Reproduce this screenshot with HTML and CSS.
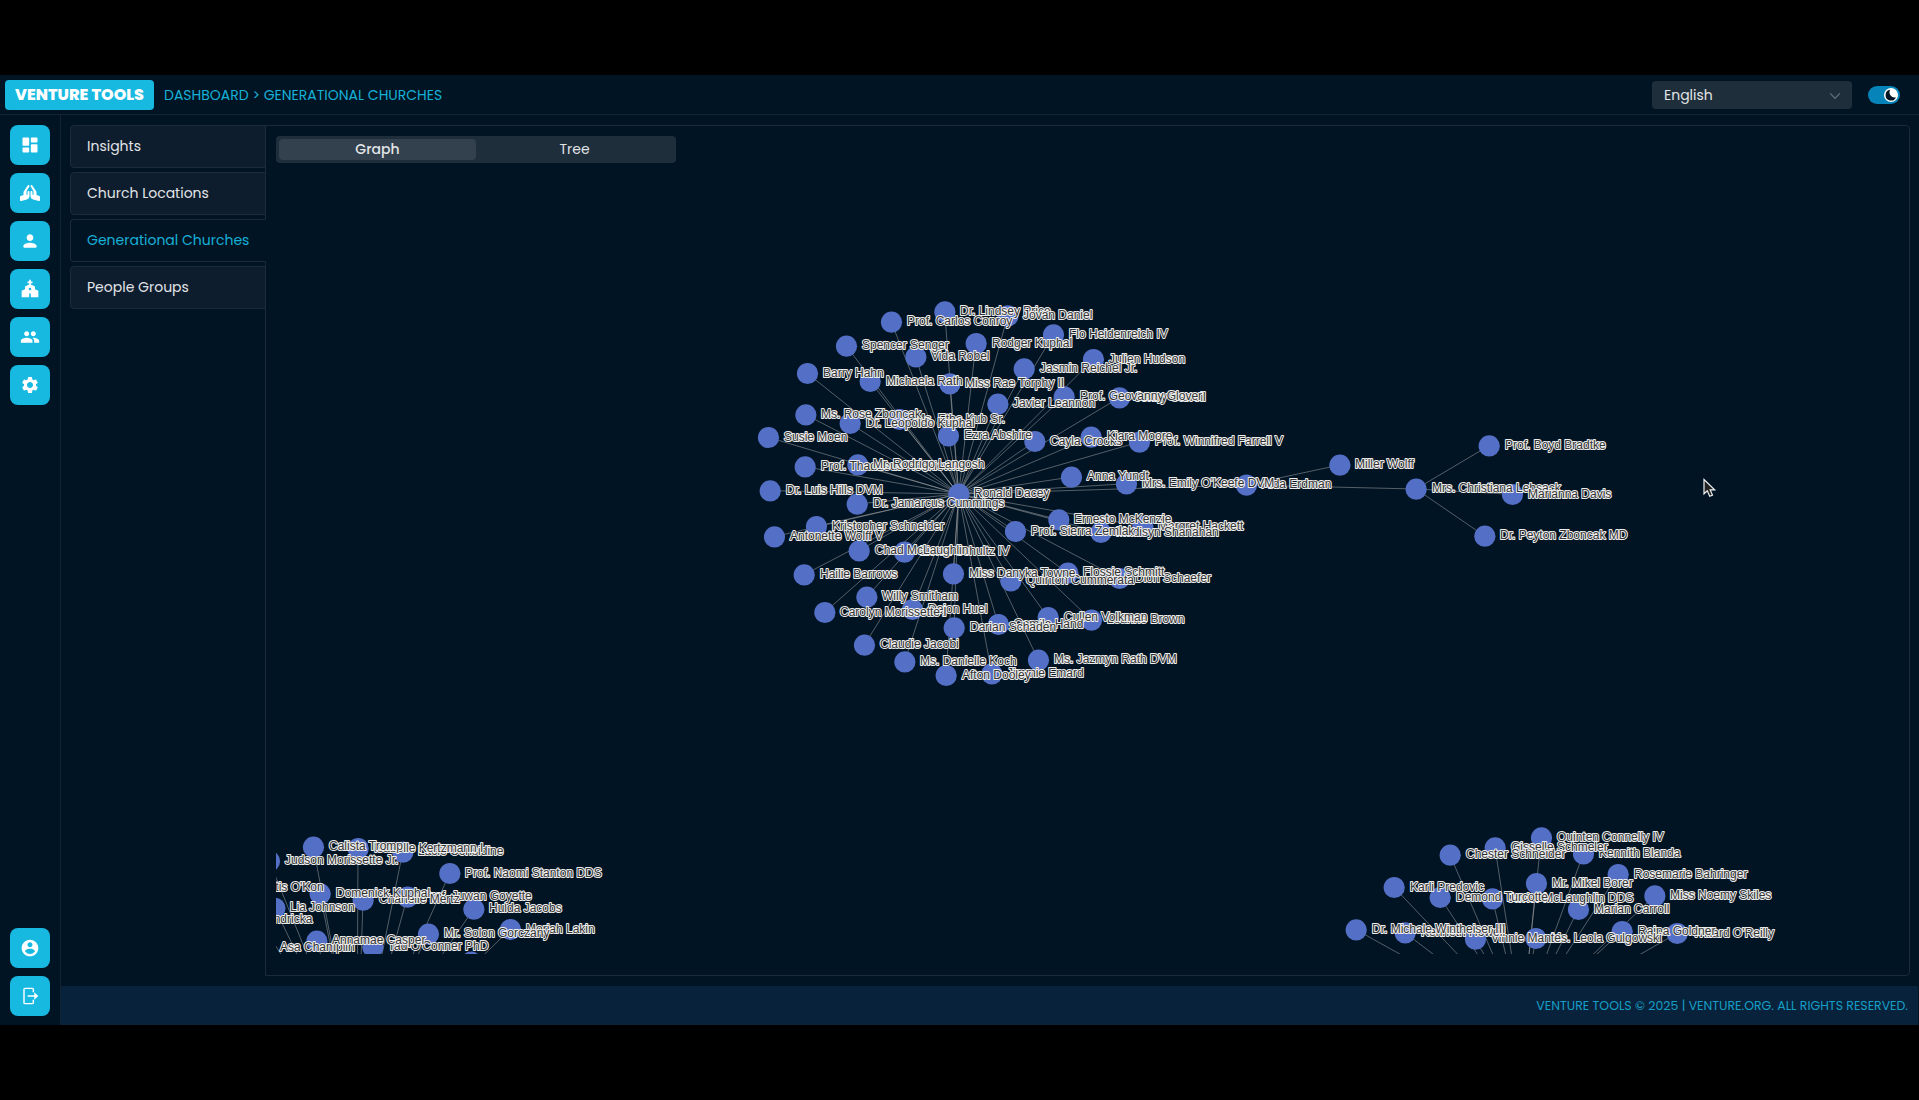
FILE: index.html
```html
<!DOCTYPE html>
<html lang="en">
<head>
<meta charset="utf-8">
<title>Venture Tools - Generational Churches</title>
<link rel="stylesheet" href="styles.css">
</head>
<body>
<div class="app">
  <header class="topbar">
    <div class="brand"><span>VENTURE TOOLS</span></div>
    <nav class="crumbs">DASHBOARD &gt; GENERATIONAL CHURCHES</nav>
    <div class="select">
      <span>English</span>
      <svg width="12" height="12" viewBox="0 0 12 12"><path d="M1.2 3.4 6 8.4l4.800-5" fill="none" stroke="#66727c" stroke-width="1.200"/></svg>
    </div>
    <div class="switch"><i><svg width="12" height="12" viewBox="0 0 12 12"><path d="M5.300.8A5.400 5.400 0 1 0 11 8.200 5 5 0 0 1 5.300.8z"/></svg></i></div>
  </header>
  <div class="body">
    <aside class="rail">
      <a class="btn"><svg viewBox="0 0 24 24"><path d="M4 13h6c.55 0 1-.45 1-1V4c0-.55-.45-1-1-1H4c-.55 0-1 .45-1 1v8c0 .55.45 1 1 1zm0 8h6c.55 0 1-.45 1-1v-4c0-.55-.45-1-1-1H4c-.55 0-1 .45-1 1v4c0 .55.45 1 1 1zm10 0h6c.55 0 1-.45 1-1v-8c0-.55-.45-1-1-1h-6c-.55 0-1 .45-1 1v8c0 .55.45 1 1 1zM13 4v4c0 .55.45 1 1 1h6c.55 0 1-.45 1-1V4c0-.55-.45-1-1-1h-6c-.55 0-1 .45-1 1z"/></svg></a>
      <a class="btn"><svg viewBox="0 0 640 512"><path d="M272 191.910c-17.600 0-32 14.400-32 32v80c0 8.840-7.160 16-16 16s-16-7.160-16-16v-76.550c0-17.390 4.720-34.470 13.690-49.390l77.750-129.590c9.090-15.160 4.190-34.810-10.970-43.910-14.450-8.670-32.720-4.300-42.300 9.210-.2.230-.62.210-.79.480l-117.260 175.900C117.560 205.900 112 224.310 112 243.290v80.230l-90.120 30.040A31.974 31.974 0 0 0 0 383.910v96c0 10.820 8.520 32 32 32 2.690 0 5.410-.34 8.060-1.030l179.190-46.620C269.160 449.990 304 403.800 304 351.910v-128c0-17.600-14.400-32-32-32zm346.120 161.730L528 323.600v-80.230c0-18.980-5.560-37.390-16.120-53.230L394.620 14.250c-.18-.27-.59-.24-.79-.48-9.580-13.510-27.850-17.880-42.300-9.210-15.160 9.090-20.060 28.750-10.970 43.910l77.750 129.590c8.970 14.920 13.690 32 13.690 49.390V304c0 8.840-7.160 16-16 16s-16-7.160-16-16v-80c0-17.600-14.400-32-32-32s-32 14.400-32 32v128c0 51.890 34.840 98.080 84.750 112.340l179.190 46.620c2.660.69 5.380 1.030 8.060 1.030 23.480 0 32-21.180 32-32v-96c0-13.770-8.810-25.990-21.880-30.350z"/></svg></a>
      <a class="btn"><svg viewBox="0 0 24 24"><path d="M12 12c2.210 0 4-1.790 4-4s-1.790-4-4-4-4 1.790-4 4 1.790 4 4 4zm0 2c-2.670 0-8 1.340-8 4v1c0 .55.45 1 1 1h14c.55 0 1-.45 1-1v-1c0-2.660-5.330-4-8-4z"/></svg></a>
      <a class="btn"><svg viewBox="0 0 24 24"><path d="M18 12.220V9l-5-2.500V5h2V3h-2V1h-2v2H9v2h2v1.500L6 9v3.220L2 14v8h9v-4c0-.55.45-1 1-1s1 .45 1 1v4h9v-8l-4-1.780zM12 13.500c-.83 0-1.500-.67-1.500-1.500s.67-1.500 1.500-1.500 1.500.67 1.500 1.500-.67 1.500-1.500 1.500z"/></svg></a>
      <a class="btn"><svg viewBox="0 0 24 24"><path d="M16 11c1.660 0 2.990-1.340 2.990-3S17.660 5 16 5c-1.660 0-3 1.340-3 3s1.340 3 3 3zm-8 0c1.660 0 2.990-1.340 2.990-3S9.660 5 8 5C6.340 5 5 6.340 5 8s1.340 3 3 3zm0 2c-2.330 0-7 1.170-7 3.500V19h14v-2.500c0-2.330-4.670-3.500-7-3.500zm8 0c-.29 0-.62.02-.97.05 1.160.84 1.970 1.970 1.970 3.450V19h6v-2.500c0-2.330-4.670-3.500-7-3.500z"/></svg></a>
      <a class="btn"><svg viewBox="0 0 24 24"><path d="M19.140 12.940c.04-.3.060-.61.060-.94 0-.32-.02-.64-.07-.94l2.030-1.580c.18-.14.23-.41.120-.61l-1.920-3.320c-.12-.22-.37-.29-.59-.22l-2.390.96c-.5-.38-1.030-.7-1.620-.94l-.36-2.540c-.04-.24-.24-.41-.48-.41h-3.840c-.24 0-.43.17-.47.410l-.36 2.540c-.59.24-1.130.57-1.620.94l-2.390-.96c-.22-.08-.47 0-.59.220L2.740 8.870c-.12.21-.08.470.120.610l2.030 1.580c-.05.3-.09.630-.09.940s.02.640.070.940l-2.030 1.580c-.18.14-.23.410-.12.610l1.920 3.320c.12.220.37.290.59.220l2.390-.96c.5.380 1.030.7 1.620.94l.36 2.540c.05.240.24.410.48.410h3.840c.24 0 .44-.17.470-.41l.36-2.540c.59-.24 1.130-.56 1.620-.94l2.390.96c.22.080.47 0 .59-.22l1.920-3.320c.12-.22.070-.47-.12-.61l-2.010-1.580zM12 15.600c-1.980 0-3.600-1.620-3.600-3.600s1.620-3.600 3.600-3.600 3.600 1.620 3.600 3.600-1.620 3.600-3.600 3.600z"/></svg></a>
      <a class="btn push"><svg viewBox="0 0 24 24"><path d="M12 2C6.480 2 2 6.480 2 12s4.480 10 10 10 10-4.480 10-10S17.520 2 12 2zm0 3c1.660 0 3 1.340 3 3s-1.340 3-3 3-3-1.340-3-3 1.340-3 3-3zm0 14.200c-2.500 0-4.710-1.280-6-3.220.03-1.990 4-3.080 6-3.080 1.990 0 5.970 1.090 6 3.080-1.290 1.940-3.500 3.220-6 3.220z"/></svg></a>
      <a class="btn"><svg viewBox="0 0 21 21"><path d="M14 6.500V3.500a1 1 0 0 0-1-1H5.200a1 1 0 0 0-1 1v14a1 1 0 0 0 1 1H13a1 1 0 0 0 1-1v-3" fill="none" stroke="#fff" stroke-width="1.500"/><path d="M8 9.700h7V6.600l4.200 3.900-4.200 3.900v-3.100H8z"/></svg></a>
    </aside>
    <div class="main">
      <div class="content">
        <nav class="tabs">
          <a class="tab">Insights</a>
          <a class="tab">Church Locations</a>
          <a class="tab active">Generational Churches</a>
          <a class="tab">People Groups</a>
        </nav>
        <section class="panel">
          <div class="segmented"><span class="seg on">Graph</span><span class="seg">Tree</span></div>
          <svg class="graph" id="graph" viewBox="276 163 1617 791"></svg>
        </section>
      </div>
      <footer class="footer"><span>VENTURE TOOLS © 2025 | VENTURE.ORG. ALL RIGHTS RESERVED.</span></footer>
    </div>
  </div>
</div>
<svg class="cursor" width="14" height="21" viewBox="0 0 14 21"><path d="M1 1.500v14.300l3.300-3 2.400 5.500 2.800-1.200-2.400-5.300h4.600z" fill="#222" stroke="#eee" stroke-width="1.200"/></svg>
<script src="graph.js"></script>
</body>
</html>
```
FILE: styles.css
```css
* { box-sizing: border-box; }
body {
  margin: 0;
  padding: 75px 0;
  height: 1100px;
  overflow: hidden;
  background: #000;
  color: #e1e4e7;
  font-family: Poppins, Inter, sans-serif;
}
.app { height: 950px; display: flex; flex-direction: column; background: #001424; }
.topbar {
  flex: 0 0 40px;
  display: flex;
  align-items: center;
  padding: 0 19px 0 5px;
  border-bottom: 1px solid #132532;
}
.brand {
  width: 149px;
  height: 30px;
  display: flex;
  align-items: center;
  justify-content: center;
  border-radius: 4px;
  background: #17b9e1;
  color: #fff;
  font-size: 16px;
  font-weight: 800;
  white-space: nowrap;
}
.crumbs { margin-left: 10px; padding-top: 1px; color: #17b0d6; font-size: 14px; white-space: nowrap; }
.select {
  margin-left: auto;
  width: 200px;
  height: 28px;
  display: flex;
  align-items: center;
  justify-content: space-between;
  padding: 1px 11px 0 12px;
  border-radius: 4px;
  background: #1f2e3b;
  font-size: 14px;
}
.switch {
  width: 32px;
  height: 18px;
  margin-left: 16px;
  display: flex;
  align-items: center;
  justify-content: flex-end;
  padding-right: 2px;
  border-radius: 9px;
  background: #0683b8;
}
.select, .switch { margin-top: 1px; }
.switch i { width: 14px; height: 14px; display: grid; place-items: center; border-radius: 50%; background: #fff; }
.switch svg { fill: #001424; }
.body { flex: 1; display: flex; min-height: 0; }
.rail {
  flex: 0 0 61px;
  display: flex;
  flex-direction: column;
  gap: 8px;
  padding: 10px 0 9px 10px;
  border-right: 1px solid #132532;
}
.btn {
  width: 40px;
  height: 40px;
  display: grid;
  place-items: center;
  border-radius: 8px;
  background: #17b9e1;
}
.btn svg { width: 20px; height: 20px; overflow: visible; fill: #fff; }
.push { margin-top: auto; }
.main { flex: 1; display: flex; flex-direction: column; min-width: 0; }
.content { flex: 1; display: flex; padding: 10px 9px 10px 9px; }
.tabs { width: 196px; display: flex; flex-direction: column; gap: 4px; z-index: 1; margin-right: -1px; }
.tab {
  height: 43px;
  display: flex;
  align-items: center;
  padding-left: 16px;
  border: 1px solid #1b2b38;
  border-radius: 4px 0 0 4px;
  background: #0e1d2e;
  font-size: 14px;
  white-space: nowrap;
}
.tab.active { background: #001424; border-right-color: #001424; color: #17b0d6; }
.panel {
  flex: 1;
  display: flex;
  flex-direction: column;
  padding: 10px 15px 21px 10px;
  border: 1px solid #1b2b38;
  border-radius: 0 4px 4px 0;
}
.segmented { width: 400px; height: 27px; display: flex; padding: 3px; border-radius: 4px; background: #1f2e3b; }
.seg { flex: 1; display: grid; place-items: center; border-radius: 4px; font-size: 14px; }
.seg.on { background: #33414e; font-weight: 500; }
.graph { flex: 1; min-height: 0; width: 1617px; overflow: hidden; }
.edge { stroke: #aaa; stroke-opacity: .5; stroke-width: 1; }
.node { fill: #5470c6; }
.label {
  font: 12px "Liberation Sans", Arial, sans-serif;
  fill: #333;
  stroke: #eee;
  stroke-width: 2px;
  stroke-linejoin: round;
  paint-order: stroke;
}
.footer {
  flex: 0 0 39px;
  margin-right: 1px;
  display: flex;
  align-items: center;
  justify-content: flex-end;
  padding-right: 10px;
  background: #09223c;
  color: #169fc6;
  font-size: 12.5px;
  white-space: nowrap;
}
.cursor { position: absolute; left: 1703px; top: 478px; }
```
FILE: graph.js
```js
// Each cluster: hub [x, y, name] and its children [x, y, name, layer].
const clusters = [
  { hub: [958.7, 494, "Ronald Dacey"], children: [
    [944.7, 311.7, "Dr. Lindsey Price"], [891.3, 322, "Prof. Carlos Conroy"], [846.3, 346, "Spencer Senger"],
    [915.7, 356.7, "Vida Robel"], [976, 343.3, "Rodger Kuphal"], [807.3, 373.3, "Barry Hahn"],
    [870, 381.3, "Michaela Rath"], [949.7, 383.7, "Miss Rae Torphy II"], [805.7, 414.7, "Ms. Rose Zboncak"],
    [850, 423.3, "Dr. Leopoldo Kuphal"], [899.3, 419.3, "Ms. Etha Kub Sr."], [948.3, 435.7, "Ezra Abshire"],
    [997.7, 404, "Javier Leannon"], [768.3, 437.3, "Susie Moen"], [805, 466.7, "Prof. Thaddeus Hodkiewicz"],
    [857.7, 464.7, "Mr. Rodrigo Langosh", 1], [770, 490.7, "Dr. Luis Hills DVM"], [1007.7, 315.7, "Jovan Daniel", 1],
    [1053.3, 334.7, "Flo Heidenreich IV"], [1093.3, 359.3, "Julien Hudson"], [1024, 368.7, "Jasmin Reichel Jr."],
    [1064, 396.7, "Prof. Geovanny Glover"], [1119.3, 397.7, "Jenny Carroll"], [1034.7, 441.3, "Cayla Crooks"],
    [1091, 437, "Kiara Moore", 1], [1139.3, 442, "Prof. Winnifred Farrell V"], [1071.3, 477, "Anna Yundt"],
    [1126.3, 483.7, "Mrs. Emily O'Keefe DVM"], [1246.3, 485, "Alda Erdman"], [857, 504, "Dr. Jamarcus Cummings"],
    [816.3, 526.3, "Kristopher Schneider"], [774.3, 536.7, "Antonette Wolff V"], [859, 550.7, "Chad McLaughlin"],
    [904.3, 552, "Lionel Schultz IV"], [804, 574.7, "Hailie Barrows"], [953.3, 573.7, "Miss Danyka Towne"],
    [1010.7, 580.7, "Quinton Cummerata"], [866.7, 597, "Willy Smitham"], [824.7, 612.3, "Carolyn Morissette I"],
    [912.3, 609.3, "Dejon Huel"], [954, 627.7, "Darian Schaden"], [998.3, 624.3, "Camila Hand"],
    [864.3, 645, "Claudie Jacobi"], [904.7, 661.7, "Ms. Danielle Koch"], [946, 675.3, "Afton Dooley"],
    [991.7, 673.7, "Jimmie Emard"], [1058.7, 519.7, "Ernesto McKenzie"], [1015.3, 531.3, "Prof. Sierra Zemlak"],
    [1100.7, 532.3, "Madisyn Shanahan"], [1142.7, 526.3, "Margret Hackett"], [1067.7, 573, "Flossie Schmitt"],
    [1119.3, 578.3, "Dion Schaefer"], [1048, 617.3, "Cullen Volkman"], [1091.3, 620, "Leanne Brown"],
    [1038.3, 660, "Ms. Jazmyn Rath DVM"]
  ] },
  { hub: [1246.3, 485], children: [[1339.7, 465, "Miller Wolff"], [1416, 489, "Mrs. Christiana Lebsack"]] },
  { hub: [1416, 489], children: [
    [1489, 445.7, "Prof. Boyd Bradtke"], [1512.3, 494.3, "Marianna Davis", 1], [1484.7, 536, "Dr. Peyton Zboncak MD"]
  ] },
  { hub: [357, 1078], children: [
    [313.3, 847, "Calista Tromp"], [358, 848.3, "Isabelle Kertzmann I"], [402.7, 852, "Lacie Considine"],
    [269.3, 861, "Judson Morissette Jr."], [449.7, 873.3, "Prof. Naomi Stanton DDS"], [240, 887.7, "Curtis O'Kon"],
    [320, 893.7, "Domenick Kuphal"], [363, 900, "Chanelle Mertz"], [407.3, 897, "Prof. Juwan Goyette"],
    [274.7, 908, "Lia Johnson"], [243, 920, "Kendricka"], [473.7, 909, "Hulda Jacobs"],
    [316.7, 941, "Annamae Casper", 1], [264, 948, "Asa Champlin"], [372.7, 947, "Tad O'Conner PhD"],
    [428.3, 934, "Mr. Solon Gorczany"], [510.3, 929.3, "Moriah Lakin"], [471, 962, ""]
  ] },
  { hub: [1522, 1022], children: [
    [1541.3, 837.7, "Quinten Connelly IV"], [1495, 847.7, "Gisselle Schmeler"], [1450, 855, "Chester Schneider"],
    [1583.3, 853.7, "Kennith Blanda"], [1618, 874.3, "Rosemarie Bahringer"], [1654.7, 895.7, "Miss Noemy Skiles"],
    [1536.3, 883.3, "Mr. Mikel Borer"], [1394, 887.3, "Karli Predovic"], [1440, 897.3, "Demond Turcotte"],
    [1492.3, 898.7, "Javier McLaughlin DDS"], [1578.3, 909.3, "Marian Carroll"], [1622, 931.3, "Raina Goldner"],
    [1677, 933.3, "Willard O'Reilly"], [1475.3, 939, "Vinnie Mante"], [1535.7, 938.3, "Ms. Leola Gulgowski"],
    [1405, 932.7, "Kenneth Howell"], [1356, 929.7, "Dr. Michale Wintheiser III"]
  ] }
];

const svg = document.getElementById("graph");
function add(tag, attrs, text) {
  const el = document.createElementNS("http://www.w3.org/2000/svg", tag);
  for (const key in attrs) el.setAttribute(key, attrs[key]);
  if (text) el.textContent = text;
  svg.appendChild(el);
}

const nodes = [];
for (const { hub, children } of clusters) {
  for (const c of children) {
    add("line", { class: "edge", x1: hub[0], y1: hub[1], x2: c[0], y2: c[1] });
    nodes.push(c);
  }
  if (hub[2]) nodes.push(hub);
}
nodes.sort((a, b) => (a[3] || 0) - (b[3] || 0) || b[0] - a[0]);
for (const [x, y] of nodes) add("circle", { class: "node", cx: x + 0.2, cy: y + 0.2, r: 10.6 });
for (const [x, y, name] of nodes) {
  if (name) add("text", { class: "label", x: Math.round(x + 15.6), y: Math.round(y + 3.3) }, name);
}
```
